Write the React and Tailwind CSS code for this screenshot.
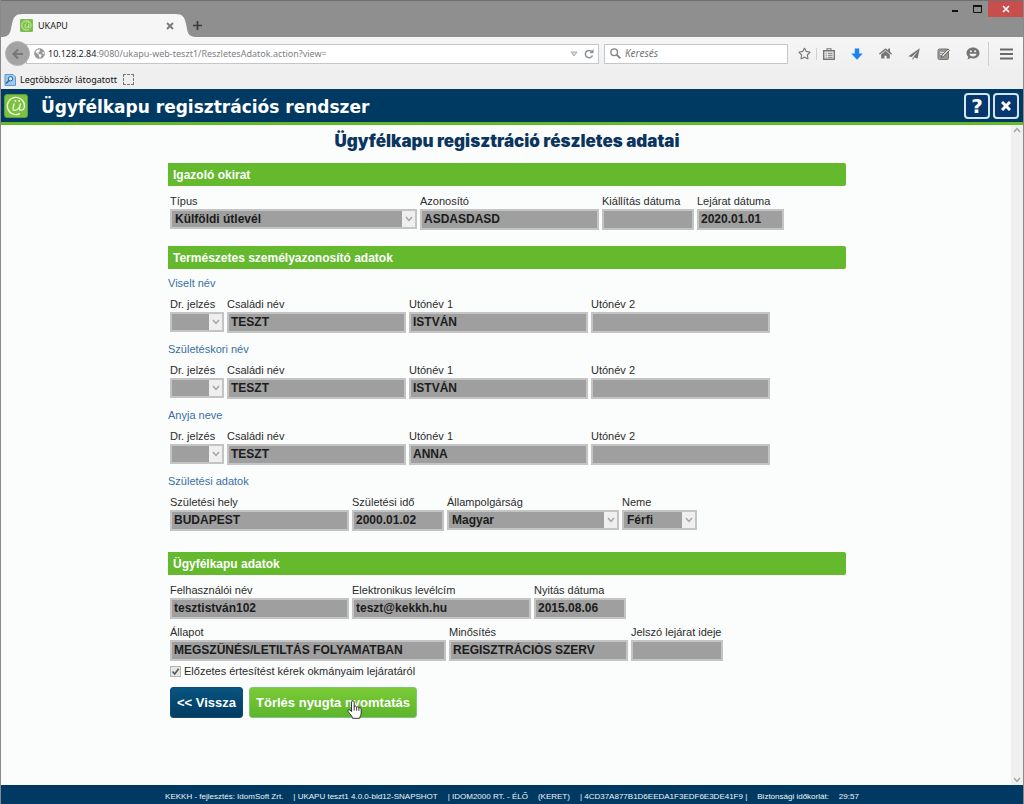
import React from 'react';
import { FaHome, FaRegStar, FaGlobeAmericas } from 'react-icons/fa';

const nameGroups = [
  { id: 'viselt', title: 'Viselt név', family: 'TESZT', first: 'ISTVÁN', second: '' },
  { id: 'szuletes', title: 'Születéskori név', family: 'TESZT', first: 'ISTVÁN', second: '' },
  { id: 'anyja', title: 'Anyja neve', family: 'TESZT', first: 'ANNA', second: '' },
];

const AtLogo = ({ className }) => (
  <svg viewBox="0 0 24 24" className={className} aria-hidden="true">
    <rect x="0.5" y="0.5" width="23" height="23" rx="2.5" fill="#7cc142" stroke="#5f9f3a" />
    <path
      d="M15.500 19.800A8.600 8.600 0 1 1 20.500 12.500C20.200 15 18.600 16.300 17 16.200 15.700 16.100 15.300 15.300 15.500 14.200L16.400 9.800M10 9.800 9.100 14C8.800 15.700 9.500 16.400 10.700 16.300 12.700 16.200 14.600 14.600 15.600 13"
      fill="none"
      stroke="#eefadf"
      strokeWidth="1.300"
      strokeLinecap="round"
    />
    <circle cx="11.400" cy="7" r="1" fill="#eefadf" />
    <circle cx="15.200" cy="7" r="1" fill="#eefadf" />
  </svg>
);

const Chevron = () => (
  <svg viewBox="0 0 8 6" className="w-2 h-1.5" aria-hidden="true">
    <path d="M1 1l3 3.500L7 1" fill="none" stroke="#a3a3a3" strokeWidth="1.400" />
  </svg>
);

const SectionBar = ({ children, className = '' }) => (
  <h2 className={`h-[23px] pl-[5px] flex items-center rounded-r-[2px] bg-[#64b92d] text-white text-[12px] font-bold ${className}`}>
    {children}
  </h2>
);

const SubTitle = ({ children, className = '' }) => (
  <h3 className={`h-4 leading-4 text-[11px] text-[#3a6ea5] ${className}`}>{children}</h3>
);

const Field = ({ id, label, value, width }) => (
  <div className={width}>
    <label htmlFor={id} className="block h-4 leading-4 text-[11px] text-[#2b2b2b] whitespace-nowrap">{label}</label>
    <input
      id={id}
      type="text"
      readOnly
      value={value}
      className="block w-full h-[21px] px-[2px] pb-px border-2 border-[#c4c4c4] bg-[#9f9f9f] text-[12px] font-bold text-[#1c1c1c] outline-none"
    />
  </div>
);

const SelectField = ({ id, label, value, width }) => (
  <div className={width}>
    <label htmlFor={id} className="block h-4 leading-4 text-[11px] text-[#2b2b2b] whitespace-nowrap">{label}</label>
    <div className="flex h-[20px] border-2 border-[#c4c4c4] bg-[#9f9f9f]">
      <select
        id={id}
        disabled
        defaultValue={value}
        className="flex-1 min-w-0 appearance-none pl-[3px] text-[12px] leading-4 font-bold text-[#1c1c1c] opacity-100"
      >
        <option value={value}>{value}</option>
      </select>
      <span className="w-[13px] flex items-center justify-center bg-[#efefef]">
        <Chevron />
      </span>
    </div>
  </div>
);

const BrowserChrome = () => (
  <header className="font-['Noto_Sans','Open_Sans',sans-serif]">
    {/* Title bar */}
    <div className="h-[37px] flex items-end bg-[#8f8f8f] border-t border-[#707070]">
      <div className="flex items-end h-[23px] min-w-0">
        <svg viewBox="0 0 22 23" className="w-[22px] h-[23px] shrink-0" aria-hidden="true">
          <path d="M0 23C10 23 9 18 11 10 12.500 3 14 0 22 0V23Z" fill="#f6f6f6" />
        </svg>
        <div className="h-[23px] w-[152px] flex items-center bg-[#f6f6f6]">
          <AtLogo className="w-[13px] h-[13px] -ml-[3px]" />
          <span className="flex-1 pl-[5px] text-[9px] text-[#222]">UKAPU</span>
          <button type="button" aria-label="Lap bezárása" className="mr-px">
            <svg viewBox="0 0 8 8" className="w-2 h-2">
              <path d="M1 1l6 6M7 1l-6 6" stroke="#777" strokeWidth="1.800" />
            </svg>
          </button>
        </div>
        <svg viewBox="0 0 22 23" className="w-[22px] h-[23px] shrink-0" aria-hidden="true">
          <path d="M22 23C12 23 13 18 11 10 9.500 3 8 0 0 0V23Z" fill="#f6f6f6" />
        </svg>
      </div>
      <button type="button" aria-label="Új lap" className="h-[23px] -ml-1 flex items-center">
        <svg viewBox="0 0 9 9" className="w-[9px] h-[9px]">
          <path d="M4.500 0v9M0 4.500h9" stroke="#3a3a3a" strokeWidth="1.700" />
        </svg>
      </button>
      <div className="ml-auto self-start flex items-start">
        <button type="button" aria-label="Kis méret" className="w-[22px] h-4 flex items-center justify-center">
          <svg viewBox="0 0 8 8" className="w-2 h-2"><path d="M1 6h6" stroke="#111" strokeWidth="2" /></svg>
        </button>
        <button type="button" aria-label="Teljes méret" className="w-[22px] h-4 flex items-center justify-center">
          <svg viewBox="0 0 9 8" className="w-[9px] h-2">
            <path d="M0.500 1.500h8v6h-8z" fill="none" stroke="#111" />
            <path d="M0 1h9" stroke="#111" strokeWidth="2" />
          </svg>
        </button>
        <button type="button" aria-label="Bezárás" className="w-[35px] h-4 flex items-center justify-center bg-[#c84e4e]">
          <svg viewBox="0 0 8 8" className="w-2 h-2"><path d="M1 1l6 6M7 1l-6 6" stroke="#fff" strokeWidth="1.600" /></svg>
        </button>
      </div>
    </div>

    {/* Address bar */}
    <div className="h-[33px] pl-1 pr-2.5 flex items-center bg-linear-to-b from-[#f6f6f6] to-[#efefef] text-[#757575]">
      <button type="button" aria-label="Vissza" className="z-10 w-[25px] h-[25px] shrink-0 rounded-full bg-[#a3a3a3] border border-[#b4b4b4] flex items-center justify-center">
        <svg viewBox="0 0 12 12" className="w-3 h-3"><path d="M11 6H2M6 1.500 1.500 6 6 10.500" fill="none" stroke="#777" strokeWidth="2.200" /></svg>
      </button>
      <div className="-ml-1 flex-1 min-w-0 h-5 pl-[7px] pr-1 flex items-center bg-white border border-[#c3c7cb]">
        <FaGlobeAmericas className="w-[11px] h-[11px] shrink-0 text-[#999]" />
        <div role="textbox" aria-label="Cím" className="flex-1 pl-[3px] text-[9px] whitespace-nowrap text-[#808080]">
          <span className="text-[#222]">10.128.2.84</span>:9080/ukapu-web-teszt1/ReszletesAdatok.action?view=
        </div>
        <svg viewBox="0 0 8 6" className="w-2 h-1.5 mr-1.5" aria-hidden="true">
          <path d="M1 1h6L4 5z" fill="#ddd" stroke="#aaa" />
        </svg>
        <button type="button" aria-label="Frissítés">
          <svg viewBox="0 0 10 10" className="w-2.5 h-2.5">
            <path d="M8 2.800A3.700 3.700 0 1 0 8.500 6.500" fill="none" stroke="#8a8f94" strokeWidth="1.500" />
            <path d="M9.500 0v4.200H5.400z" fill="#8a8f94" />
          </svg>
        </button>
      </div>
      <div className="ml-[5px] w-[184px] h-5 pl-[5px] flex items-center gap-1 bg-white border border-[#c3c7cb]">
        <svg viewBox="0 0 11 11" className="w-[11px] h-[11px] shrink-0" aria-hidden="true">
          <circle cx="4.200" cy="4.200" r="3.300" fill="none" stroke="#858585" strokeWidth="1.400" />
          <path d="M6.600 6.600 10.300 10.300" stroke="#858585" strokeWidth="1.900" />
        </svg>
        <input
          type="search"
          aria-label="Keresés"
          placeholder="Keresés"
          className="flex-1 min-w-0 text-[10px] italic placeholder:text-[#777] outline-none"
        />
      </div>
      <div className="ml-2.5 flex items-center">
        <button type="button" aria-label="Könyvjelző"><FaRegStar className="w-[13px] h-[13px]" /></button>
        <span className="ml-[5px] w-px h-3 bg-[#d0d0d0]" />
        <button type="button" aria-label="Könyvjelzők listája" className="ml-1.5">
          <svg viewBox="0 0 12 12" className="w-3 h-3">
            <path d="M0.700 2.700h10.600v8.600H0.700z" fill="none" stroke="#757575" strokeWidth="1.400" />
            <path d="M4 2.500V0.700h4v1.800M2.500 5.200h1.200M4.800 5.200h4.800M2.500 7.200h1.200M4.800 7.200h4.800M2.500 9.200h1.200M4.800 9.200h4.800" fill="none" stroke="#757575" strokeWidth="1.100" />
          </svg>
        </button>
        <button type="button" aria-label="Letöltések" className="ml-4">
          <svg viewBox="0 0 12 12" className="w-3 h-3"><path d="M3.800 0.500h4.400V5.500H11.700L6 11.700 0.300 5.500H3.800z" fill="#1b84f0" /></svg>
        </button>
        <button type="button" aria-label="Kezdőlap" className="ml-4"><FaHome className="w-[13px] h-[13px]" /></button>
        <button type="button" aria-label="Küldés" className="ml-4">
          <svg viewBox="0 0 12 12" className="w-3 h-3">
            <path d="M11.800 0.300 0.300 8.200 3.700 8.900 10 3 5.200 9.200 9.600 10.600z M4.600 9.500V12L6.200 10.100z" fill="#757575" />
          </svg>
        </button>
        <button type="button" aria-label="Jegyzet" className="ml-[17px]">
          <svg viewBox="0 0 13 12" className="w-[13px] h-3">
            <rect x="1" y="1" width="10.500" height="10.500" rx="1.500" fill="#999" stroke="#777" />
            <path d="M3 4.500h5M3 6.500h3" stroke="#ddd" />
            <path d="M4.200 9.300 5 7 11 1l1.500 1.400L6.500 8.600z" fill="#e4dcc8" stroke="#555" strokeWidth="0.800" />
          </svg>
        </button>
        <button type="button" aria-label="Csevegés" className="ml-4">
          <svg viewBox="0 0 14 13" className="w-3.5 h-[13px]">
            <path d="M7 0.500C11 0.500 13.500 3 13.500 6S11 11.500 7 11.500C6.200 11.500 5.300 11.400 4.600 11.100L1.500 12.500 2.300 9.800C1.100 8.900 0.500 7.500 0.500 6 0.500 3 3 0.500 7 0.500z" fill="#757575" />
            <path d="M3.400 6.800h7.200C10.300 10.300 3.700 10.300 3.400 6.800z" fill="#f2f2f2" />
            <circle cx="4.900" cy="4.300" r="1" fill="#f2f2f2" />
            <circle cx="9.100" cy="4.300" r="1" fill="#f2f2f2" />
          </svg>
        </button>
        <span className="ml-2 w-px h-6 bg-[#d0d0d0]" />
        <button type="button" aria-label="Menü" className="ml-[11px]">
          <svg viewBox="0 0 13 12" className="w-[13px] h-3"><path d="M0 1.500h13M0 6h13M0 10.500h13" stroke="#6a6a6a" strokeWidth="2" /></svg>
        </button>
      </div>
    </div>

    {/* Bookmarks */}
    <div className="h-[19px] pl-[3px] flex items-center bg-[#efefef] text-[9px] text-[#111]">
      <svg viewBox="0 0 12 12" className="w-3 h-3" aria-hidden="true">
        <path d="M1 0.500h8l2.500 2.500v8.500H1z" fill="#9cc9ee" stroke="#5b9bd0" />
        <circle cx="6.500" cy="4.800" r="2.200" fill="#d9edfb" stroke="#2a5f96" />
        <path d="M5 6.500 2 9.500" stroke="#2a5f96" strokeWidth="1.500" />
      </svg>
      <a href="#latogatott" className="ml-1">Legtöbbször látogatott</a>
      <span className="ml-1.5 w-[11px] h-[11px] border border-dashed border-[#777]" />
    </div>
  </header>
);

const HandCursor = () => (
  <svg viewBox="0 0 15 19" className="absolute left-[97px] top-3 w-[15px] h-[19px] pointer-events-none" aria-hidden="true">
    <path
      d="M4.500 11.500V2.200C4.500 0.300 7.200 0.300 7.200 2.200V7C7.400 5.700 9.500 5.800 9.600 7.400 10 6.400 11.800 6.600 11.900 8.100 12.400 7.300 14.200 7.600 14.200 9.200V13C14.200 15 13 16 12.700 18.300H5.600C5.200 16 2.800 14 1.200 11.700 0.200 10.200 1.700 8.900 3 10.100z"
      fill="#fff"
      stroke="#222"
      strokeWidth="0.900"
    />
    <path d="M7.200 7v3.500M9.600 7.400v3.300M11.900 8.100v2.800" stroke="#222" strokeWidth="0.900" />
  </svg>
);

const App = () => {
  return (
    <div className="min-h-screen flex flex-col bg-[#fbfdfc] border-x border-[#8a8a8a] font-['Liberation_Sans',Arial,sans-serif]">
      <BrowserChrome />

      {/* Application header */}
      <div className="h-9 pl-[3px] pr-1 flex items-center bg-[#003a63] border-b-[3px] border-[#64b92d]">
        <AtLogo className="w-6 h-6" />
        <h1 className="flex-1 pl-[13px] pt-0.5 text-[17px] leading-6 font-bold text-white font-['DejaVu_Sans',Verdana,sans-serif]">
          Ügyfélkapu regisztrációs rendszer
        </h1>
        <div className="flex gap-[3px]">
          <button type="button" aria-label="Súgó" className="w-[26px] h-[26px] flex items-center justify-center rounded-[4px] border-2 border-[#d3e3f0] bg-[#06386f] text-white text-[20px] leading-5 font-bold font-['DejaVu_Sans',sans-serif]">
            ?
          </button>
          <button type="button" aria-label="Kilépés" className="w-[26px] h-[26px] flex items-center justify-center rounded-[4px] border-2 border-[#d3e3f0] bg-[#06386f]">
            <svg viewBox="0 0 10 10" className="w-2.5 h-2.5"><path d="M1 1l8 8M9 1l-8 8" stroke="#fff" strokeWidth="3" /></svg>
          </button>
        </div>
      </div>

      <div className="flex-1 flex">
        <main className="flex-1 min-w-0 pt-1 pb-6 pl-0.5">
          <div className="w-full max-w-[678px] mx-auto">
            <h1 className="h-6 leading-6 mb-2.5 text-center text-[17px] font-black text-[#0b3560] font-['Inter','Liberation_Sans',sans-serif]">
              Ügyfélkapu regisztráció részletes adatai
            </h1>

            <SectionBar>Igazoló okirat</SectionBar>
            <div className="mt-[7px] pl-0.5 flex gap-[3px]">
              <SelectField id="tipus" label="Típus" value="Külföldi útlevél" width="w-[247px]" />
              <Field id="azonosito" label="Azonosító" value="ASDASDASD" width="w-[179px]" />
              <Field id="kiallitas" label="Kiállítás dátuma" value="" width="w-[92px]" />
              <Field id="lejarat" label="Lejárat dátuma" value="2020.01.01" width="w-[87px]" />
            </div>

            <SectionBar className="mt-4">Természetes személyazonosító adatok</SectionBar>
            {nameGroups.map((group, i) => (
              <React.Fragment key={group.id}>
                <SubTitle className={i === 0 ? 'mt-1.5' : 'mt-2'}>{group.title}</SubTitle>
                <div className="mt-[5px] pl-0.5 flex gap-[3px]">
                  <SelectField id={`${group.id}-dr`} label="Dr. jelzés" value="" width="w-[54px]" />
                  <Field id={`${group.id}-csaladi`} label="Családi név" value={group.family} width="w-[179px]" />
                  <Field id={`${group.id}-uto1`} label="Utónév 1" value={group.first} width="w-[179px]" />
                  <Field id={`${group.id}-uto2`} label="Utónév 2" value={group.second} width="w-[179px]" />
                </div>
              </React.Fragment>
            ))}
            <SubTitle className="mt-2">Születési adatok</SubTitle>
            <div className="mt-[5px] pl-0.5 flex gap-[3px]">
              <Field id="szul-hely" label="Születési hely" value="BUDAPEST" width="w-[179px]" />
              <Field id="szul-ido" label="Születési idő" value="2000.01.02" width="w-[92px]" />
              <SelectField id="allampolgarsag" label="Állampolgárság" value="Magyar" width="w-[172px]" />
              <SelectField id="neme" label="Neme" value="Férfi" width="w-[75px]" />
            </div>

            <SectionBar className="mt-[21px]">Ügyfélkapu adatok</SectionBar>
            <div className="mt-[7px] pl-0.5 flex gap-[3px]">
              <Field id="felhasznalo" label="Felhasználói név" value="tesztistván102" width="w-[179px]" />
              <Field id="email" label="Elektronikus levélcím" value="teszt@kekkh.hu" width="w-[179px]" />
              <Field id="nyitas" label="Nyitás dátuma" value="2015.08.06" width="w-[92px]" />
            </div>
            <div className="mt-[5px] pl-0.5 flex gap-[3px]">
              <Field id="allapot" label="Állapot" value="MEGSZŰNÉS/LETILTÁS FOLYAMATBAN" width="w-[276px]" />
              <Field id="minosites" label="Minősítés" value="REGISZTRÁCIÓS SZERV" width="w-[179px]" />
              <Field id="jelszo" label="Jelszó lejárat ideje" value="" width="w-[92px]" />
            </div>

            <label className="mt-0.5 ml-0.5 h-4 flex items-center gap-[3px] text-[11px] text-[#2b2b2b]">
              <span className="grid">
                <input
                  type="checkbox"
                  defaultChecked
                  className="col-start-1 row-start-1 appearance-none w-[11px] h-[11px] border border-[#b5b5b5] bg-[#e6e6e6]"
                />
                <svg viewBox="0 0 11 11" className="col-start-1 row-start-1 w-[11px] h-[11px] pointer-events-none" aria-hidden="true">
                  <path d="M2.500 5.500l2.200 2.500L8.700 2.700" fill="none" stroke="#555" strokeWidth="1.600" />
                </svg>
              </span>
              Előzetes értesítést kérek okmányaim lejáratáról
            </label>

            <div className="mt-2 ml-0.5 flex gap-1.5">
              <button type="button" className="w-[73px] h-[31px] rounded-[3px] border border-[#0c4d75] bg-linear-to-b from-[#075580] to-[#033b62] text-white text-[13px] font-bold whitespace-nowrap">
                {'<< Vissza'}
              </button>
              <button type="button" className="relative w-[168px] h-[31px] rounded-[3px] border border-[#7fc67c] bg-linear-to-b from-[#7acb35] to-[#5cb52c] text-white text-[13px] font-bold whitespace-nowrap">
                Törlés nyugta nyomtatás
                <HandCursor />
              </button>
            </div>
          </div>
        </main>

        {/* Scrollbar */}
        <div className="w-3 flex flex-col justify-between items-center py-0.5 bg-[#f0f0f0]">
          <span className="rotate-180"><Chevron /></span>
          <Chevron />
        </div>
      </div>

      <footer className="h-[19px] pt-[5px] px-4 flex justify-center gap-2.5 bg-[#003a63] text-[8px] leading-[14px] text-[#eef4f8] whitespace-nowrap">
        <span>KEKKH - fejlesztés: IdomSoft Zrt.</span>
        <span>| UKAPU teszt1 4.0.0-bld12-SNAPSHOT</span>
        <span>| IDOM2000 RT. - ÉLŐ</span>
        <span>(KERET)</span>
        <span>| 4CD37A877B1D6EEDA1F3EDF6E3DE41F9 |</span>
        <span>Biztonsági időkorlát:</span>
        <span>29:57</span>
      </footer>
    </div>
  );
};

export default App;
